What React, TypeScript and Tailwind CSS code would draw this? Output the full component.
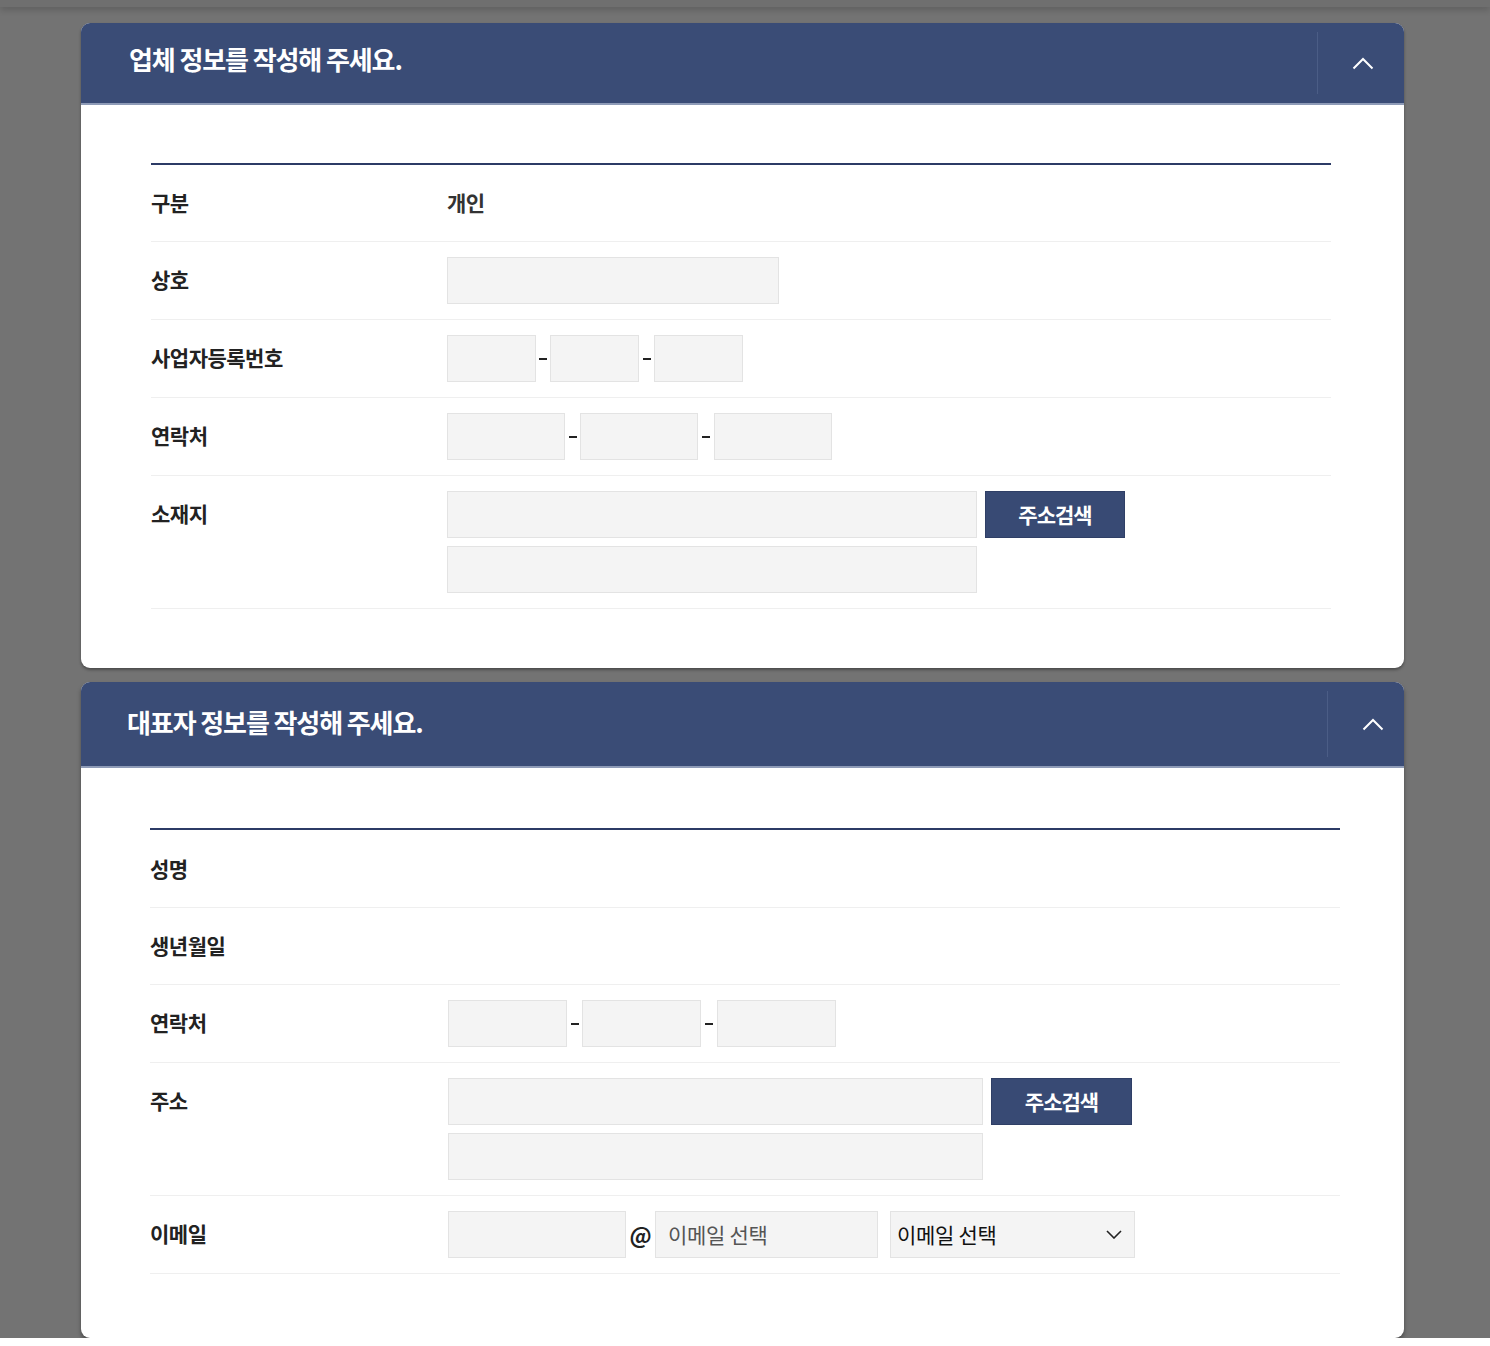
import React from 'react';

const font = { fontFamily: '"Noto Sans CJK KR", "Noto Sans", sans-serif' };

function Chevron() {
  return (
    <svg width="22" height="13" viewBox="0 0 22 13" fill="none">
      <path d="M1.5 11.5L11 2L20.5 11.5" stroke="white" strokeWidth="2" />
    </svg>
  );
}

function Input({ w }: { w: string }) {
  return <div className={`h-[47px] ${w} bg-[#f4f4f4] border border-[#e3e3e3]`} />;
}

function Dash({ w }: { w: string }) {
  return (
    <span className={`${w} flex justify-center items-center h-[47px]`}>
      <span className="block w-[8px] h-[2px] bg-[#222]" />
    </span>
  );
}

function Row({
  label,
  children,
  col = 'w-[296px]',
  lh = 'h-[46px]',
}: {
  label: string;
  children?: React.ReactNode;
  col?: string;
  lh?: string;
}) {
  return (
    <div className="flex border-b border-[#efefef] py-[15px]">
      <div className={`${col} ${lh} shrink-0 flex items-center text-[21px] font-bold tracking-[-0.5px] text-[#222]`}>
        {label}
      </div>
      <div className="flex-1">{children}</div>
    </div>
  );
}

function SearchButton({ w }: { w: string }) {
  return (
    <button
      className={`${w} h-[47px] bg-[#384a74] border border-[#2f3f66] text-white text-[21px] font-bold tracking-[-1px]`}
    >
      주소검색
    </button>
  );
}

function Header({ title, h, zone, pl, pb }: { title: string; h: string; zone: string; pl: string; pb: string }) {
  return (
    <div className={`${h} bg-[#3a4c76] border-b-2 border-[#8e9bb7] flex items-stretch rounded-t-[9px]`}>
      <div className={`flex-1 flex items-center ${pl} ${pb} text-white text-[26px] font-bold tracking-[-1.1px]`}>
        {title}
      </div>
      <div className={`${zone} flex items-center pl-[34px] my-[9px] border-l border-[#4b5d86]`}>
        <Chevron />
      </div>
    </div>
  );
}

export default function App() {
  return (
    <div style={font} className="w-[1490px] h-[1338px] bg-[#737373]">
      <div className="h-[7px] bg-[#6f6f6f] shadow-[0_3px_6px_rgba(0,0,0,0.18)]" />

      <div className="pl-[81px] pt-[16px] w-[1404px] flex flex-col gap-[14px]">
        {/* 업체 정보 */}
        <div className="bg-white rounded-[9px] shadow-[0_2px_3px_rgba(0,0,0,0.35)]">
          <Header title="업체 정보를 작성해 주세요." h="h-[82px]" zone="w-[87px]" pl="pl-[48px]" pb="pb-[10px]" />
          <div className="pl-[70px] pr-[73px] pt-[58px] pb-[59px]">
            <div className="border-t-2 border-[#2c3b66]">
              <Row label="구분">
                <div className="h-[46px] flex items-center text-[21px] font-bold tracking-[-0.5px] text-[#333]">개인</div>
              </Row>
              <Row label="상호">
                <Input w="w-[332px]" />
              </Row>
              <Row label="사업자등록번호">
                <div className="flex">
                  <Input w="w-[89px]" />
                  <Dash w="w-[14px]" />
                  <Input w="w-[89px]" />
                  <Dash w="w-[15px]" />
                  <Input w="w-[89px]" />
                </div>
              </Row>
              <Row label="연락처">
                <div className="flex">
                  <Input w="w-[118px]" />
                  <Dash w="w-[15px]" />
                  <Input w="w-[118px]" />
                  <Dash w="w-[16px]" />
                  <Input w="w-[118px]" />
                </div>
              </Row>
              <Row label="소재지">
                <div className="flex flex-col gap-[8px]">
                  <div className="flex gap-[8px]">
                    <Input w="w-[530px]" />
                    <SearchButton w="w-[140px]" />
                  </div>
                  <Input w="w-[530px]" />
                </div>
              </Row>
            </div>
          </div>
        </div>

        {/* 대표자 정보 */}
        <div className="bg-white rounded-[9px] shadow-[0_3px_4px_rgba(0,0,0,0.35)]">
          <Header title="대표자 정보를 작성해 주세요." h="h-[86px]" zone="w-[77px]" pl="pl-[46px]" pb="pb-[6px]" />
          <div className="pl-[69px] pr-[64px] pt-[60px] pb-[64px]">
            <div className="border-t-2 border-[#2c3b66]">
              <Row label="성명" col="w-[298px]" lh="h-[47px]" />
              <Row label="생년월일" col="w-[298px]" />
              <Row label="연락처" col="w-[298px]">
                <div className="flex">
                  <Input w="w-[119px]" />
                  <Dash w="w-[15px]" />
                  <Input w="w-[119px]" />
                  <Dash w="w-[16px]" />
                  <Input w="w-[119px]" />
                </div>
              </Row>
              <Row label="주소" col="w-[298px]">
                <div className="flex flex-col gap-[8px]">
                  <div className="flex gap-[8px]">
                    <Input w="w-[535px]" />
                    <SearchButton w="w-[141px]" />
                  </div>
                  <Input w="w-[535px]" />
                </div>
              </Row>
              <Row label="이메일" col="w-[298px]">
                <div className="flex items-center">
                  <Input w="w-[178px]" />
                  <span className="w-[29px] text-center text-[22px] font-bold text-[#222]">@</span>
                  <div className="w-[223px] h-[47px] bg-[#f4f4f4] border border-[#e3e3e3] flex items-center pl-[12px] text-[21px] tracking-[-0.3px] text-[#555]">
                    이메일 선택
                  </div>
                  <div className="ml-[12px] w-[245px] h-[47px] bg-[#f4f4f4] border border-[#e3e3e3] flex items-center justify-between pl-[6px] pr-[12px] text-[21px] tracking-[-0.3px] text-[#111]">
                    <span>이메일 선택</span>
                    <svg width="16" height="9" viewBox="0 0 16 9" fill="none">
                      <path d="M1 1L8 8L15 1" stroke="#222" strokeWidth="1.6" />
                    </svg>
                  </div>
                </div>
              </Row>
            </div>
          </div>
        </div>
      </div>
    </div>
  );
}
